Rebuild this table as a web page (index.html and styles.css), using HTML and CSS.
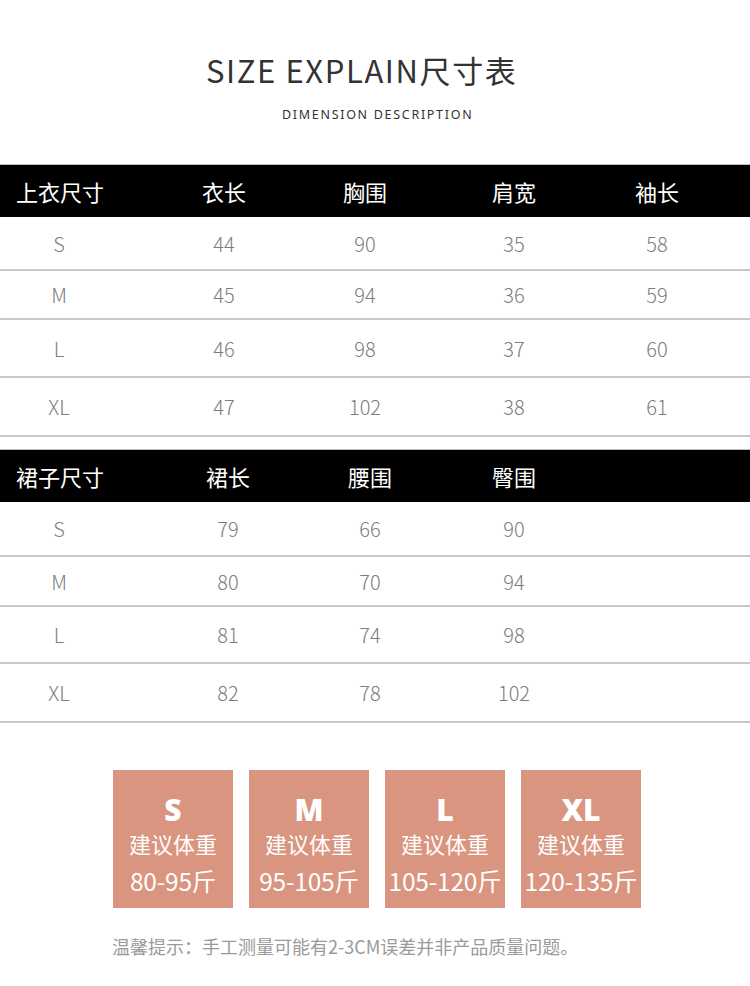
FILE: index.html
```html
<!DOCTYPE html>
<html lang="zh">
<head>
<meta charset="utf-8">
<link rel="stylesheet" href="styles.css">
</head>
<body>
<div class="page">
  <header class="head">
    <h1 class="title">SIZE EXPLAIN尺寸表</h1>
    <p class="subtitle">DIMENSION DESCRIPTION</p>
  </header>

  <section class="table top">
    <div class="row hdr"><span class="first">上衣尺寸</span><span>衣长</span><span>胸围</span><span>肩宽</span><span>袖长</span></div>
    <div class="row r1"><span>S</span><span>44</span><span>90</span><span>35</span><span>58</span></div>
    <div class="row r2"><span>M</span><span>45</span><span>94</span><span>36</span><span>59</span></div>
    <div class="row r3"><span>L</span><span>46</span><span>98</span><span>37</span><span>60</span></div>
    <div class="row r4"><span>XL</span><span>47</span><span>102</span><span>38</span><span>61</span></div>
  </section>

  <section class="table skirt">
    <div class="row hdr"><span class="first">裙子尺寸</span><span>裙长</span><span>腰围</span><span>臀围</span></div>
    <div class="row r1"><span>S</span><span>79</span><span>66</span><span>90</span></div>
    <div class="row r2"><span>M</span><span>80</span><span>70</span><span>94</span></div>
    <div class="row r3"><span>L</span><span>81</span><span>74</span><span>98</span></div>
    <div class="row r4"><span>XL</span><span>82</span><span>78</span><span>102</span></div>
  </section>

  <section class="cards">
    <div class="card"><div class="sz">S</div><div class="lbl">建议体重</div><div class="rng">80-95斤</div></div>
    <div class="card"><div class="sz">M</div><div class="lbl">建议体重</div><div class="rng">95-105斤</div></div>
    <div class="card"><div class="sz">L</div><div class="lbl">建议体重</div><div class="rng">105-120斤</div></div>
    <div class="card"><div class="sz">XL</div><div class="lbl">建议体重</div><div class="rng">120-135斤</div></div>
  </section>

  <p class="note">温馨提示：手工测量可能有2-3CM误差并非产品质量问题。</p>
</div>
</body>
</html>
```

FILE: styles.css
```css
* { box-sizing: border-box; }
html, body { margin: 0; padding: 0; background: #fff; }
body { font-family: "Noto Sans CJK SC", "Noto Sans", sans-serif; color: #333; }
.page { width: 750px; height: 986px; overflow: hidden; }

.head { padding-top: 50px; height: 160px; }
.title {
  margin: 0; padding-left: 206px;
  font-size: 31px; font-weight: 400; line-height: 40px; color: #333;
  letter-spacing: 1.6px;
}
.subtitle {
  margin: 17px 0 0; padding-left: 282px;
  font-family: "Noto Sans", sans-serif;
  font-size: 12.5px; line-height: 16px; letter-spacing: 1.7px; color: #333;
}

.table { margin-top: 4px; }
.table.skirt { margin-top: 12px; }
.row { display: grid; align-items: center; border-bottom: 2px solid #c9c9c9; }
.row span { text-align: center; }
.top .row { grid-template-columns: 118px 212px 70px 228px 58px 1fr; }
.skirt .row { grid-template-columns: 118px 220px 64px 224px 1fr; }

.row.hdr {
  background: #000; color: #fff; border-top: 1px solid #bdbdbd; border-bottom: 0;
  font-size: 22px; height: 53px;
}
.row.hdr .first { text-align: left; padding-left: 16px; }
.row:not(.hdr) {
  color: #7d7d7d; font-size: 20px; font-weight: 300;
  font-family: "Noto Sans CJK SC", "Open Sans", sans-serif;
}
.top .r1 { height: 54px; }
.top .r2 { height: 49px; }
.top .r3 { height: 58px; }
.top .r4 { height: 59px; }
.skirt .r1 { height: 55px; }
.skirt .r2 { height: 50px; }
.skirt .r3 { height: 57px; }
.skirt .r4 { height: 59px; }

.cards { display: flex; gap: 16px; padding-left: 113px; margin-top: 47px; }
.card {
  width: 120px; height: 138px; background: #d9957f; color: #fff;
  display: flex; flex-direction: column; align-items: center;
  padding-top: 22px;
}
.sz { font-family: "Open Sans", "Noto Sans", sans-serif; font-weight: 800; font-size: 30px; line-height: 36px; }
.lbl { font-size: 22px; line-height: 30px; margin-top: 0; }
.rng { font-size: 24.5px; line-height: 30px; margin-top: 8px; white-space: nowrap; letter-spacing: -0.2px; }

.note {
  margin: 26px 0 0; padding-left: 112px;
  font-size: 18px; line-height: 24px; color: #9a9a9a;
}
```
